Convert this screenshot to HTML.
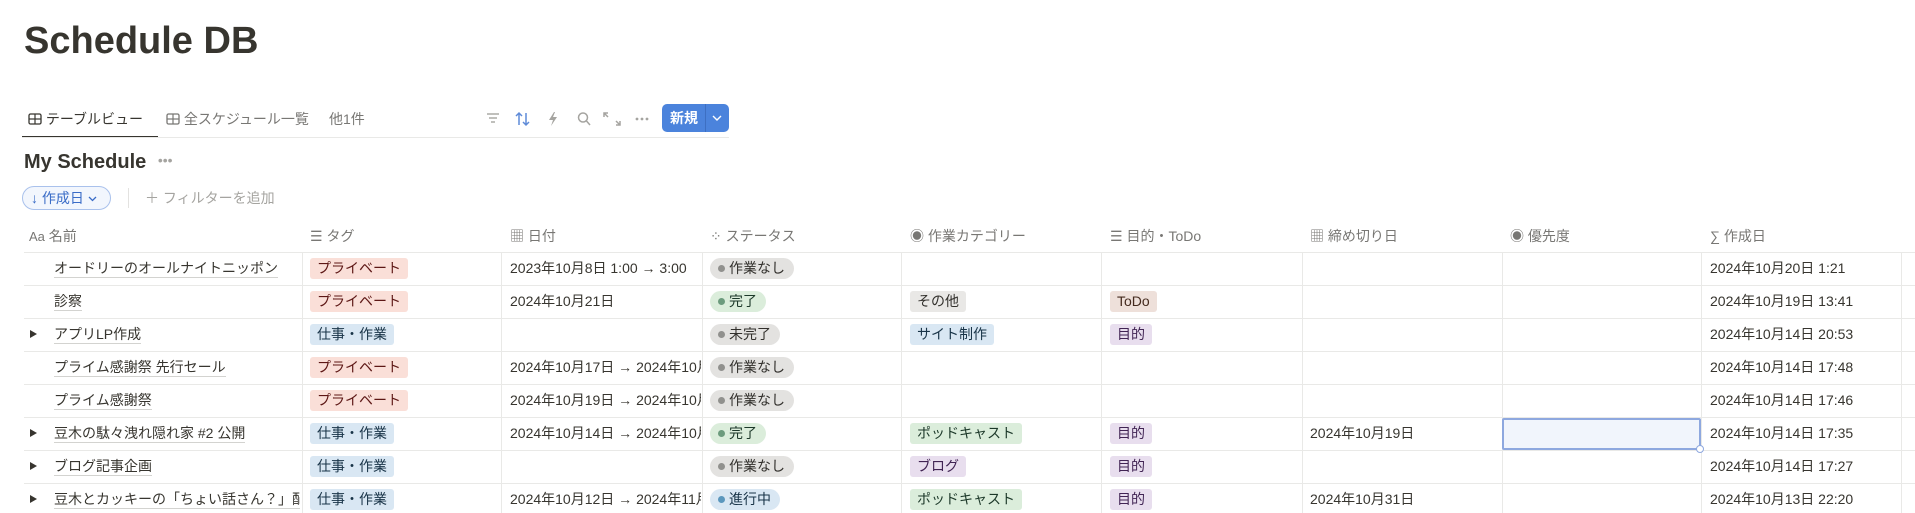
<!DOCTYPE html>
<html><head><meta charset="utf-8"><style>
*{box-sizing:border-box;margin:0;padding:0}
body{width:1915px;height:513px;overflow:hidden;background:#fff;font-family:"Liberation Sans","Noto Sans CJK JP",sans-serif;color:#37352f;position:relative;font-size:14px}
.a{position:absolute;white-space:nowrap}
.t{line-height:21px}
.g{color:#787774}
.tag{display:inline-block;padding:0 7px;height:21px;line-height:21px;border-radius:3px;font-size:14px}
.pk{background:#fadfd8;color:#5d1715}
.bl{background:#d9e7f3;color:#183347}
.gr{background:#e3e2e0;color:#32302c;border-radius:11px;padding:0 9px 0 8px}
.gn{background:#dbeddb;color:#1c3829}
.pu{background:#e8deee;color:#412454}
.br{background:#eee0da;color:#442a1e}
.gy{background:#e9e8e6;color:#32302c}
.dot{display:inline-block;width:7px;height:7px;border-radius:50%;margin-right:4px;vertical-align:1px}
.hl{position:absolute;left:24px;width:1891px;height:1px;background:#e9e9e7}
.vl{position:absolute;top:252px;width:1px;height:261px;background:#e9e9e7}
.nm{border-bottom:1px solid #d3d3d0;padding-bottom:1px}
.tri{position:absolute;left:30px;width:0;height:0;border-left:7px solid #37352f;border-top:4.5px solid transparent;border-bottom:4.5px solid transparent}
</style></head><body>
<div class="a" style="left:24px;top:20px;font-size:38px;font-weight:bold;color:#37352f">Schedule DB</div>

<div class="a" style="left:28px;top:109px;font-size:14px">
<svg width="14" height="14" style="vertical-align:-2px"><rect x="1" y="2" width="12" height="10" rx="1.5" fill="none" stroke="#37352f" stroke-width="1.3"/><line x1="1" y1="7" x2="13" y2="7" stroke="#37352f" stroke-width="1.2"/><line x1="7" y1="2" x2="7" y2="12" stroke="#37352f" stroke-width="1.2"/></svg> テーブルビュー</div>
<div class="a g" style="left:166px;top:109px">
<svg width="14" height="14" style="vertical-align:-2px"><rect x="1" y="2" width="12" height="10" rx="1.5" fill="none" stroke="#787774" stroke-width="1.3"/><line x1="1" y1="7" x2="13" y2="7" stroke="#787774" stroke-width="1.2"/><line x1="7" y1="2" x2="7" y2="12" stroke="#787774" stroke-width="1.2"/></svg> 全スケジュール一覧</div>
<div class="a g" style="left:329px;top:109px">他1件</div>
<div class="a" style="left:22px;top:136px;width:136px;height:2px;background:#37352f"></div>
<div class="a" style="left:22px;top:137px;width:707px;height:1px;background:#e9e9e7"></div>

<svg class="a" style="left:486px;top:111px" width="170" height="16">
<g stroke="#a5a4a0" stroke-width="1.4" fill="none">
<line x1="1" y1="3" x2="13" y2="3"/><line x1="3" y1="7" x2="11" y2="7"/><line x1="5" y1="11" x2="9" y2="11"/>
</g>
<g stroke="#5f8bd8" stroke-width="1.5" fill="none">
<path d="M33 14V2M30 5l3-3 3 3M40 2v12M37 11l3 3 3-3"/>
</g>
<path d="M68 1l-5 8h4l-2 6 6-9h-4l2-5z" fill="#a5a4a0"/>
<g stroke="#a5a4a0" stroke-width="1.5" fill="none"><circle cx="97" cy="6.5" r="4.5"/><line x1="100.5" y1="10" x2="104" y2="14"/>
<path d="M122 2h-4v4M118 2l4 4M130 14h4v-4M134 14l-4-4"/></g>
<g fill="#a5a4a0"><circle cx="151" cy="8" r="1.4"/><circle cx="156" cy="8" r="1.4"/><circle cx="161" cy="8" r="1.4"/></g>
</svg>
<div class="a" style="left:662px;top:104px;width:67px;height:28px;background:#4b83dc;border-radius:5px;color:#fff;font-weight:bold;font-size:14px;line-height:28px;padding-left:8px">新規</div>
<div class="a" style="left:705px;top:104px;width:1px;height:28px;background:#3d6fc2"></div>
<svg class="a" style="left:711px;top:113px" width="12" height="10"><path d="M2 3l4 4 4-4" stroke="#fff" stroke-width="1.4" fill="none"/></svg>

<div class="a" style="left:24px;top:151px;font-size:20px;font-weight:bold">My Schedule <span style="color:#a5a4a0;font-size:14px;font-weight:normal;vertical-align:3px;margin-left:6px">•••</span></div>

<div class="a" style="left:22px;top:186px;width:89px;height:24px;border:1px solid #a9c1ec;background:#f2f6fd;border-radius:12px;color:#3a6cc7;font-size:14px;line-height:22px;padding-left:8px">↓ 作成日 <svg width="9" height="8"><path d="M1 2l3.5 3.5L8 2" stroke="#3a6cc7" stroke-width="1.3" fill="none"/></svg></div>
<div class="a" style="left:128px;top:188px;width:1px;height:20px;background:#e3e2e0"></div>
<div class="a" style="left:145px;top:188px;color:#a5a4a0;font-size:14px">＋ フィルターを追加</div>

<div class="a g" style="left:29px;top:226px"><span style="font-size:13px">Aa</span> 名前</div>
<div class="a g" style="left:310px;top:226px">☰ タグ</div>
<div class="a g" style="left:510px;top:226px">▦ 日付</div>
<div class="a g" style="left:710px;top:226px">⁘ ステータス</div>
<div class="a g" style="left:910px;top:226px">◉ 作業カテゴリー</div>
<div class="a g" style="left:1110px;top:226px">☰ 目的・ToDo</div>
<div class="a g" style="left:1310px;top:226px">▦ 締め切り日</div>
<div class="a g" style="left:1510px;top:226px">◉ 優先度</div>
<div class="a g" style="left:1710px;top:226px">∑ 作成日</div>

<div class="hl" style="top:252px"></div>
<div class="hl" style="top:285px"></div>
<div class="hl" style="top:318px"></div>
<div class="hl" style="top:351px"></div>
<div class="hl" style="top:384px"></div>
<div class="hl" style="top:417px"></div>
<div class="hl" style="top:450px"></div>
<div class="hl" style="top:483px"></div>
<div class="vl" style="left:302px"></div><div class="vl" style="left:501px"></div><div class="vl" style="left:702px"></div><div class="vl" style="left:901px"></div><div class="vl" style="left:1101px"></div><div class="vl" style="left:1302px"></div><div class="vl" style="left:1502px"></div><div class="vl" style="left:1701px"></div><div class="vl" style="left:1901px"></div>

<div class="a" style="left:1502px;top:418px;width:199px;height:32px;border:2px solid #8ea8df;background:#f1f5fc;border-radius:2px"></div>
<div class="a" style="left:1696px;top:445px;width:8px;height:8px;border:1.5px solid #8ea8df;background:#fff;border-radius:50%"></div>

<div class="a t" style="left:54px;top:258px"><span class="nm">オードリーのオールナイトニッポン</span></div>
<div class="a" style="left:310px;top:258px"><span class="tag pk">プライベート</span></div>
<div class="a t" style="left:510px;top:258px">2023年10月8日 1:00 → 3:00</div>
<div class="a" style="left:710px;top:258px"><span class="tag gr"><span class="dot" style="background:#91918e"></span>作業なし</span></div>
<div class="a t" style="left:1710px;top:258px">2024年10月20日 1:21</div>

<div class="a t" style="left:54px;top:291px"><span class="nm">診察</span></div>
<div class="a" style="left:310px;top:291px"><span class="tag pk">プライベート</span></div>
<div class="a t" style="left:510px;top:291px">2024年10月21日</div>
<div class="a" style="left:710px;top:291px"><span class="tag gr gn"><span class="dot" style="background:#6c9b7d"></span>完了</span></div>
<div class="a" style="left:910px;top:291px"><span class="tag gy">その他</span></div>
<div class="a" style="left:1110px;top:291px"><span class="tag br">ToDo</span></div>
<div class="a t" style="left:1710px;top:291px">2024年10月19日 13:41</div>

<div class="tri" style="top:330px"></div>
<div class="a t" style="left:54px;top:324px"><span class="nm">アプリLP作成</span></div>
<div class="a" style="left:310px;top:324px"><span class="tag bl">仕事・作業</span></div>
<div class="a" style="left:710px;top:324px"><span class="tag gr"><span class="dot" style="background:#91918e"></span>未完了</span></div>
<div class="a" style="left:910px;top:324px"><span class="tag bl">サイト制作</span></div>
<div class="a" style="left:1110px;top:324px"><span class="tag pu">目的</span></div>
<div class="a t" style="left:1710px;top:324px">2024年10月14日 20:53</div>

<div class="a t" style="left:54px;top:357px"><span class="nm">プライム感謝祭 先行セール</span></div>
<div class="a" style="left:310px;top:357px"><span class="tag pk">プライベート</span></div>
<div class="a t" style="left:510px;top:357px;width:191px;overflow:hidden">2024年10月17日 → 2024年10月</div>
<div class="a" style="left:710px;top:357px"><span class="tag gr"><span class="dot" style="background:#91918e"></span>作業なし</span></div>
<div class="a t" style="left:1710px;top:357px">2024年10月14日 17:48</div>

<div class="a t" style="left:54px;top:390px"><span class="nm">プライム感謝祭</span></div>
<div class="a" style="left:310px;top:390px"><span class="tag pk">プライベート</span></div>
<div class="a t" style="left:510px;top:390px;width:191px;overflow:hidden">2024年10月19日 → 2024年10月</div>
<div class="a" style="left:710px;top:390px"><span class="tag gr"><span class="dot" style="background:#91918e"></span>作業なし</span></div>
<div class="a t" style="left:1710px;top:390px">2024年10月14日 17:46</div>

<div class="tri" style="top:429px"></div>
<div class="a t" style="left:54px;top:423px"><span class="nm">豆木の駄々洩れ隠れ家 #2 公開</span></div>
<div class="a" style="left:310px;top:423px"><span class="tag bl">仕事・作業</span></div>
<div class="a t" style="left:510px;top:423px;width:191px;overflow:hidden">2024年10月14日 → 2024年10月</div>
<div class="a" style="left:710px;top:423px"><span class="tag gr gn"><span class="dot" style="background:#6c9b7d"></span>完了</span></div>
<div class="a" style="left:910px;top:423px"><span class="tag gn">ポッドキャスト</span></div>
<div class="a" style="left:1110px;top:423px"><span class="tag pu">目的</span></div>
<div class="a t" style="left:1310px;top:423px">2024年10月19日</div>
<div class="a t" style="left:1710px;top:423px">2024年10月14日 17:35</div>

<div class="tri" style="top:462px"></div>
<div class="a t" style="left:54px;top:456px"><span class="nm">ブログ記事企画</span></div>
<div class="a" style="left:310px;top:456px"><span class="tag bl">仕事・作業</span></div>
<div class="a" style="left:710px;top:456px"><span class="tag gr"><span class="dot" style="background:#91918e"></span>作業なし</span></div>
<div class="a" style="left:910px;top:456px"><span class="tag pu">ブログ</span></div>
<div class="a" style="left:1110px;top:456px"><span class="tag pu">目的</span></div>
<div class="a t" style="left:1710px;top:456px">2024年10月14日 17:27</div>

<div class="tri" style="top:495px"></div>
<div class="a t" style="left:54px;top:489px;width:246px;overflow:hidden"><span class="nm">豆木とカッキーの「ちょい話さん？」配信</span></div>
<div class="a" style="left:310px;top:489px"><span class="tag bl">仕事・作業</span></div>
<div class="a t" style="left:510px;top:489px;width:191px;overflow:hidden">2024年10月12日 → 2024年11月</div>
<div class="a" style="left:710px;top:489px"><span class="tag gr" style="background:#d9e7f3;color:#183347"><span class="dot" style="background:#5b97bd"></span>進行中</span></div>
<div class="a" style="left:910px;top:489px"><span class="tag gn">ポッドキャスト</span></div>
<div class="a" style="left:1110px;top:489px"><span class="tag pu">目的</span></div>
<div class="a t" style="left:1310px;top:489px">2024年10月31日</div>
<div class="a t" style="left:1710px;top:489px">2024年10月13日 22:20</div>
</body></html>
